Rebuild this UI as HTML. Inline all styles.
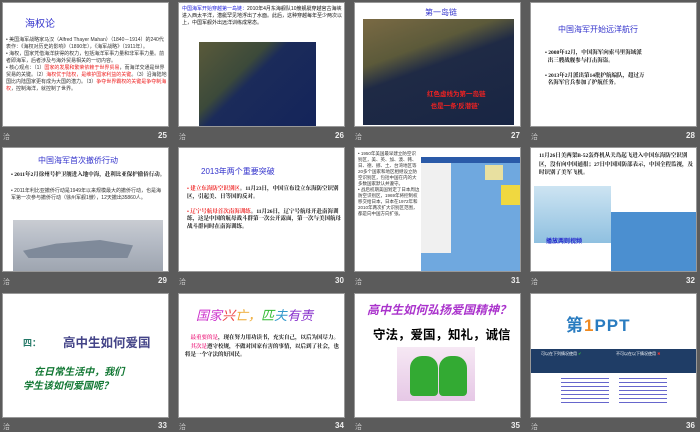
<!DOCTYPE html>
<html><head><meta charset="utf-8"><style>
*{margin:0;padding:0;box-sizing:border-box}
body{width:700px;height:431px;background:#5b5b5b;position:relative;overflow:hidden;font-family:"Liberation Sans","Noto Sans CJK SC",sans-serif}
.s{position:absolute;width:167px;height:125px;background:#fff;border:1px solid #999;overflow:hidden}
.a{position:absolute}
.n{position:absolute;color:#eee;font-size:8px;font-weight:bold}
.i{position:absolute;color:#ccc;font-size:7px}
.t{font-size:5px;line-height:7px;color:#333}
.b{font-size:5.5px;line-height:7.5px;color:#111;font-weight:bold;font-family:"Liberation Serif","Noto Serif CJK SC",serif}
.r{color:#e22}
</style></head><body>

<div class="s" style="left:2px;top:2px">
 <div class="a" style="left:22px;top:12px;color:#33c;font-size:10px">海权论</div>
 <div class="a t" style="left:3px;top:34px;width:162px">• 美国海军战略家马汉（Alfred Thayer Mahan）（1840－1914）的240代表作：《海权对历史的影响》（1890年），《海军战略》（1911年）。<br>• 海权，国家凭借海洋获得的权力，包括海洋军事力量和非军事力量。前者即海军，后者涉及与海外贸易相关的一切内容。<br>• 核心观点：（1）<span class="r">国家的发展和繁荣依赖于世界贸易</span>，而海洋交通是世界贸易的关键。（2）<span class="r">海权优于陆权，是维护国家利益的关键</span>。（3）沿海陆地国比内陆国家更有成为大国的潜力。（3）<span class="r">争夺世界霸权的关键是争夺制海权</span>，控制海洋，就控制了世界。</div>
</div>
<div class="i" style="left:3px;top:132px">洽</div><div class="n" style="left:158px;top:131px">25</div>

<div class="s" style="left:178px;top:2px">
 <div class="a t" style="left:3px;top:3px;width:162px;color:#111"><span style="color:#22d">中国海军开始穿越第一岛链：</span>2010年4月东海舰队10艘舰艇穿越宫古海峡进入西太平洋，潜艇罕见地浮出了水面。此后，这种穿越每年至少两次以上，中国军舰外出远洋训练成常态。</div>
 <div class="a" style="left:20px;top:39px;width:117px;height:84px;background:linear-gradient(135deg,#5a5a3a 0%,#3c4a3a 35%,#1b2b5a 45%,#14245a 100%)"></div>
</div>
<div class="i" style="left:179px;top:132px">洽</div><div class="n" style="left:335px;top:131px">26</div>

<div class="s" style="left:354px;top:2px">
 <div class="a" style="left:70px;top:4px;color:#33c;font-size:8px">第一岛链</div>
 <div class="a" style="left:8px;top:16px;width:151px;height:106px;background:linear-gradient(160deg,#7a6a44 0%,#5c5a3a 30%,#1f2a45 45%,#182544 100%)"></div>
 <div class="a" style="left:72px;top:86px;color:#e22;font-size:6.5px;font-weight:bold;line-height:12px">红色虚线为第一岛链<br>&nbsp;&nbsp;也是一条'反潜链'</div>
</div>
<div class="i" style="left:355px;top:132px">洽</div><div class="n" style="left:511px;top:131px">27</div>

<div class="s" style="left:530px;top:2px">
 <div class="a" style="left:27px;top:21px;color:#33c;font-size:8px">中国海军开始远洋航行</div>
 <div class="a b" style="left:14px;top:47px;width:140px">• 2008年12月，中国海军向索马里海域派<br>&nbsp;&nbsp;出三艘战舰参与打击海盗。<br><br>• 2013年2月派出第14批护航编队，超过万<br>&nbsp;&nbsp;名海军官兵参加了护航任务。</div>
</div>
<div class="i" style="left:531px;top:132px">洽</div><div class="n" style="left:686px;top:131px">28</div>

<div class="s" style="left:2px;top:147px">
 <div class="a" style="left:35px;top:7px;color:#33c;font-size:8px">中国海军首次撤侨行动</div>
 <div class="a b" style="left:8px;top:24px;width:155px">• 2011年2月徐州号护卫舰进入地中海，赴利比亚保护撤侨行动。</div>
 <div class="a t" style="left:8px;top:40px;width:155px">• 2011年利比亚撤侨行动是1949年以来规模最大的撤侨行动，也是海军第一次参与撤侨行动（徐州军舰1艘），12天撤出35860人。</div>
 <div class="a" style="left:10px;top:72px;width:150px;height:51px;background:linear-gradient(180deg,#c9ccd2 0%,#b6bcc6 40%,#9ea5b0 100%)"></div>
 <div class="a" style="left:20px;top:92px;width:110px;height:18px;background:#7f8a9a;clip-path:polygon(0 60%,30% 20%,70% 0,100% 30%,95% 100%,5% 100%)"></div>
</div>
<div class="i" style="left:3px;top:277px">洽</div><div class="n" style="left:158px;top:276px">29</div>

<div class="s" style="left:178px;top:147px">
 <div class="a" style="left:22px;top:18px;color:#33c;font-size:8px">2013年两个重要突破</div>
 <div class="a b" style="left:8px;top:38px;width:155px"><span style="color:#e22">• 建立东海防空识别区</span>。11月23日，中国宣布设立东海防空识别区，引起美、日等国的反对。<br><br><span style="color:#e22">• 辽宁号航母首次南海训练</span>。11月26日，辽宁号航母开赴南海训练，这是中国的航母战斗群第一次公开露面，第一次与美国航母战斗群同时在南海训练。</div>
</div>
<div class="i" style="left:179px;top:277px">洽</div><div class="n" style="left:335px;top:276px">30</div>

<div class="s" style="left:354px;top:147px">
 <div class="a t" style="left:3px;top:3px;width:62px;font-size:4.5px;line-height:6px">• 1950年美国最早建立防空识别区，美、英、加、澳、韩、日、德、挪、土、台湾地区等20多个国家和地区相继设立防空识别区，包括中国在内的大多数国家默认并遵守。<br>• 战后初期美国划定了日本周边防空识别区，1969年将控制权移交给日本，日本在1972年和2010年两次扩大识别区范围，都是向中国方向扩张。</div>
 <div class="a" style="left:66px;top:9px;width:99px;height:114px;background:#6fa8df"></div>
 <div class="a" style="left:66px;top:9px;width:99px;height:6px;background:#2a5aa8"></div>
 <div class="a" style="left:66px;top:15px;width:30px;height:90px;background:#f0f0f0"></div>
 <div class="a" style="left:130px;top:17px;width:18px;height:15px;background:#e8e0a0"></div>
 <div class="a" style="left:146px;top:37px;width:19px;height:20px;background:#f0d840"></div>
</div>
<div class="i" style="left:355px;top:277px">洽</div><div class="n" style="left:511px;top:276px">31</div>

<div class="s" style="left:530px;top:147px">
 <div class="a b" style="left:8px;top:4px;width:158px;line-height:8.5px">11月26日美两架B-52轰炸机从关岛起飞进入中国东海防空识别区，没有向中国通报；27日中国国防部表示，中国全程监视，及时识别了美军飞机。</div>
 <div class="a" style="left:3px;top:38px;width:77px;height:57px;background:linear-gradient(180deg,#cde4f2,#8fc0e0)"></div>
 <div class="a" style="left:80px;top:64px;width:86px;height:60px;background:#4b8fd0"></div>
 <div class="a" style="left:15px;top:88px;color:#22c;font-size:6px;font-weight:bold">播放两则视频</div>
</div>
<div class="i" style="left:531px;top:277px">洽</div><div class="n" style="left:686px;top:276px">32</div>

<div class="s" style="left:2px;top:293px">
 <div class="a" style="left:20px;top:42px;color:#276;font-size:9px;font-weight:bold">四：</div>
 <div class="a" style="left:60px;top:38px;color:#448;font-size:12.5px;font-weight:bold">高中生如何爱国</div>
 <div class="a" style="left:20px;top:72px;color:#173;font-size:10px;font-style:italic;font-weight:bold;line-height:14px">&nbsp;&nbsp;&nbsp;&nbsp;在日常生活中，我们<br>学生该如何爱国呢？</div>
</div>
<div class="i" style="left:3px;top:422px">洽</div><div class="n" style="left:158px;top:421px">33</div>

<div class="s" style="left:178px;top:293px">
 <div class="a" style="left:17px;top:11px;font-size:13px;font-style:italic"><span style="color:#c3c">国家</span><span style="color:#e44">兴</span><span style="color:#ea3">亡，</span><span style="color:#3b3">匹</span><span style="color:#39c">夫</span><span style="color:#83c">有责</span></div>
 <div class="a b" style="left:6px;top:40px;width:158px;line-height:8.5px">&nbsp;&nbsp;&nbsp;&nbsp;<span style="color:#e38">最重要的是</span>，现在努力用功读书，充实自己，以后为国尽力。<br>&nbsp;&nbsp;&nbsp;&nbsp;<span style="color:#e38">其次是</span>遵守校规，不做对国家有害的事情，以后到了社会，也将是一个守法的好国民。</div>
</div>
<div class="i" style="left:179px;top:422px">洽</div><div class="n" style="left:335px;top:421px">34</div>

<div class="s" style="left:354px;top:293px">
 <div class="a" style="left:12px;top:7px;color:#a3c;font-size:12px;font-style:italic;font-weight:bold;white-space:nowrap">高中生如何弘扬爱国精神？</div>
 <div class="a" style="left:18px;top:30px;color:#000;font-size:12.5px;font-weight:bold;white-space:nowrap">守法，爱国，知礼，诚信</div>
 <div class="a" style="left:42px;top:53px;width:78px;height:54px;background:linear-gradient(180deg,#f6e8f4,#e6c8e6)"></div>
 <div class="a" style="left:55px;top:62px;width:28px;height:40px;background:#3a3;border-radius:12px 12px 4px 4px"></div>
 <div class="a" style="left:84px;top:62px;width:28px;height:40px;background:#3a3;border-radius:12px 12px 4px 4px"></div>
</div>
<div class="i" style="left:355px;top:422px">洽</div><div class="n" style="left:511px;top:421px">35</div>

<div class="s" style="left:530px;top:293px">
 <div class="a" style="left:35px;top:17px;font-size:17px;font-weight:bold;color:#2a7cc0;letter-spacing:1px">第<span style="color:#f08a20">1</span>PPT</div>
 <div class="a" style="left:0;top:55px;width:167px;height:24px;background:#1f3d66"></div>
 <div class="a" style="left:10px;top:57px;color:#fff;font-size:4px;line-height:5px">可以在下列情况使用 <span style="color:#3c3">✔</span></div>
 <div class="a" style="left:85px;top:57px;color:#fff;font-size:4px;line-height:5px">不可以在以下情况使用 <span style="color:#e33">✖</span></div>
 <div class="a" style="left:30px;top:84px;width:48px;height:28px;background:repeating-linear-gradient(180deg,#66c 0 1px,transparent 1px 4px)"></div>
 <div class="a" style="left:88px;top:84px;width:48px;height:28px;background:repeating-linear-gradient(180deg,#66c 0 1px,transparent 1px 4px)"></div>
</div>
<div class="i" style="left:531px;top:422px">洽</div><div class="n" style="left:686px;top:421px">36</div>

</body></html>
